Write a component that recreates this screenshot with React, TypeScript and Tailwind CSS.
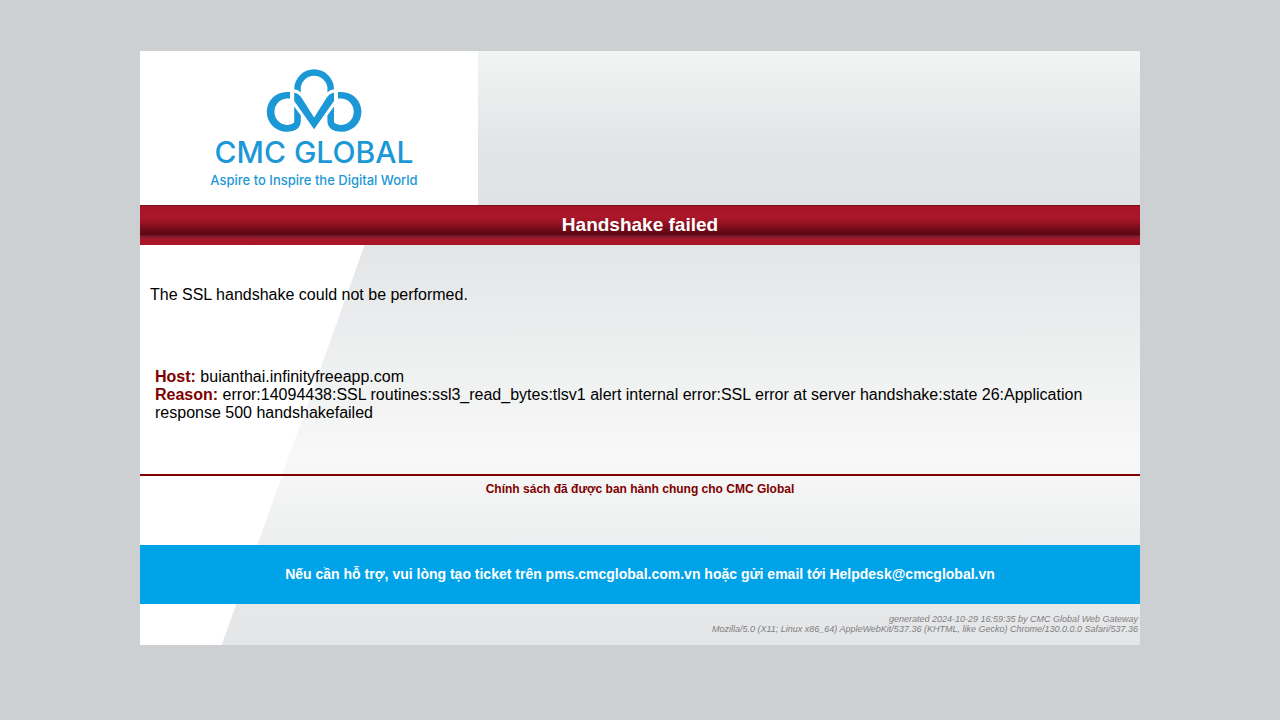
function CloudMark() {
  return (
    <svg viewBox="266 68 96 64" className="h-16 w-24 fill-[#1c98d6]" role="img" aria-label="CMC Global">
      <path d="M294.2 89.2 A19.9 19.9 0 0 1 334 89.2 Q330 89.6 327.3 92.4 Q327.5 91 327.5 89.2 A13.4 13.4 0 0 0 300.7 89.2 Q300.7 91 300.9 92.4 Q298.2 89.6 294.2 89.2 Z" />
      <path d="M290 92 V98.4 H286.6 A13.3 13.3 0 0 0 286.6 124.9 Q291.4 125.2 294.2 122.6 V106.4 L300.8 115.6 V120.6 Q300.8 131.7 286.6 131.7 A19.85 19.85 0 0 1 286.6 92 Z" />
      <path d="M338 92 V98.4 H341.6 A13.3 13.3 0 0 1 341.6 124.9 Q336.8 125.2 334 122.6 V106.4 L327.4 115.6 V120.6 Q327.4 131.7 341.6 131.7 A19.85 19.85 0 0 0 341.6 92 Z" />
      <path d="M294.2 92.8 Q298.6 93.6 301.4 97.6 L314.1 117.6 L326.8 97.6 Q329.6 93.6 334 92.8 V101 L314.1 129.2 L294.2 101 Z" />
    </svg>
  );
}

export default function App() {
  return (
    <div className="min-h-screen bg-[#ccd0d3] py-[51px] font-['Liberation_Sans',Arial,sans-serif] text-base leading-[18px] text-black">
      <div className="mx-auto max-w-[1000px]">
        <header className="flex bg-linear-to-b from-[#f3f5f4] via-[#e3e5e7] via-55% to-[#dfe3e4]">
          <div className="flex h-[154px] w-[338px] flex-col items-center bg-white pt-[17px] pl-[10px] font-['Inter',sans-serif] text-[#1c98d6]">
            <CloudMark />
            <div className="mt-1 text-[30px] leading-8 font-medium">CMC GLOBAL</div>
            <div className="mt-1 text-[13px] leading-4 font-medium">Aspire to Inspire the Digital World</div>
          </div>
        </header>

        <h1 className="h-10 bg-[linear-gradient(#7d1020_0px,#7d1020_1px,#a51528_1px,#ac162a_12px,#a01427_16px,#6b0917_26px,#5a0713_30px,#8a2435_31px,#7a1325_32px,#8a2435_33px,#ac162a_34px,#a61528_40px)] pt-[9px] text-center text-[19px] leading-[22px] font-bold text-white">
          Handshake failed
        </h1>

        <div className="bg-[linear-gradient(109.67deg,#fff_211px,transparent_212px),linear-gradient(#e4e5e7,#f7f8f7_53%,#e7e8ea_88%,#e4e5e7)]">
          <main className="border-b-2 border-[#800000] pt-[41px] pb-[52px]">
            <p className="px-2.5">The SSL handshake could not be performed.</p>
            <div className="mt-16 px-[15px]">
              <p>
                <strong className="text-[#800000]">Host:</strong> buianthai.infinityfreeapp.com
              </p>
              <p>
                <strong className="text-[#800000]">Reason:</strong> error:14094438:SSL routines:ssl3_read_bytes:tlsv1 alert
                internal error:SSL error at server handshake:state 26:Application response 500 handshakefailed
              </p>
            </div>
          </main>
          <p className="pt-1.5 pb-[49px] text-center text-xs leading-[14px] font-bold text-[#800000]">
            Chính sách đã được ban hành chung cho CMC Global
          </p>
          <p className="bg-[#00a2e8] px-2 pt-[21px] pb-[22px] text-center text-sm leading-4 font-bold text-white">
            Nếu cần hỗ trợ, vui lòng tạo ticket trên pms.cmcglobal.com.vn hoặc gửi email tới Helpdesk@cmcglobal.vn
          </p>
          <footer className="pt-2.5 pr-0.5 pb-[11px] text-right text-[9px] leading-[10px] text-[#808080] italic">
            <p>generated 2024-10-29 16:59:35 by CMC Global Web Gateway</p>
            <p>Mozilla/5.0 (X11; Linux x86_64) AppleWebKit/537.36 (KHTML, like Gecko) Chrome/130.0.0.0 Safari/537.36</p>
          </footer>
        </div>
      </div>
    </div>
  );
}
